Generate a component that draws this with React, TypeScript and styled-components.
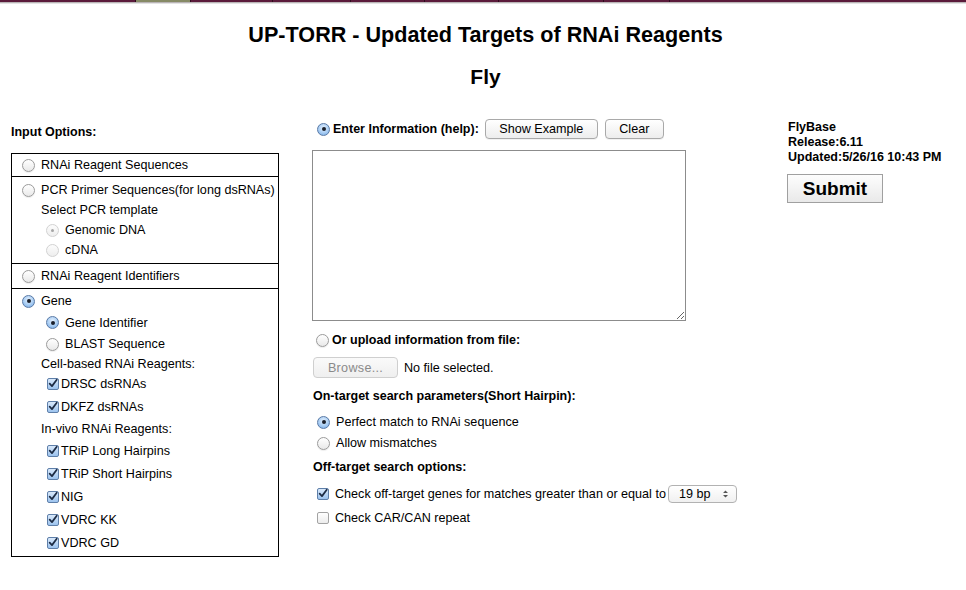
import React from "react"
import styled, { createGlobalStyle, css } from "styled-components"

const GlobalStyle = createGlobalStyle`
  html, body {
    margin: 0;
    padding: 0;
    background: #fff;
  }
  body {
    font-family: "Liberation Sans", Arial, Helvetica, sans-serif;
    font-size: 12.6px;
    color: #000;
  }
`

const tabs = [
  { w: 135 },
  { w: 54, active: true },
  { w: 81 },
  { w: 77 },
  { w: 73 },
  { w: 73 },
  { w: 104 },
  { w: 65 },
  { w: 304 },
]

type RadioState = "on" | "off" | "dim-on" | "dim-off"

const Radio = ({ state }: { state: RadioState }) => (
  <StyledRadio $state={state}>{(state === "on" || state === "dim-on") && <Dot $dim={state === "dim-on"} />}</StyledRadio>
)

const Check = ({ checked }: { checked: boolean }) => (
  <StyledCheck $checked={checked}>
    {checked && (
      <svg width="11" height="11" viewBox="0 0 11 11">
        <path d="M1.8 5.6 L4.4 8.4 L9.6 1.4" fill="none" stroke="#1d2c44" strokeWidth="1.9" strokeLinecap="round" strokeLinejoin="round" />
      </svg>
    )}
  </StyledCheck>
)

const App = () => {
  return (
    <>
      <GlobalStyle />
      <TopBar>
        {tabs.map((t, i) => (
          <Tab key={i} $w={t.w} $active={!!t.active} $first={i === 0} />
        ))}
      </TopBar>
      <Title>UP-TORR - Updated Targets of RNAi Reagents</Title>
      <SubTitle>Fly</SubTitle>

      <Main>
        <LeftColumn>
          <BoldLabel $top={7}>Input Options:</BoldLabel>
          <OptionsBox>
            <Section $pad="0">
              <Row $h={22} $indent={10}>
                <Radio state="off" />
                <span>RNAi Reagent Sequences</span>
              </Row>
            </Section>
            <Section $pad="3px 0">
              <Row $h={20} $indent={10}>
                <Radio state="off" />
                <span>PCR Primer Sequences(for long dsRNAs)</span>
              </Row>
              <Row $h={20} $indent={29}>
                Select PCR template
              </Row>
              <Row $h={20} $indent={34}>
                <Radio state="dim-on" />
                <span>Genomic DNA</span>
              </Row>
              <Row $h={20} $indent={34}>
                <Radio state="dim-off" />
                <span>cDNA</span>
              </Row>
            </Section>
            <Section $pad="1px 0">
              <Row $h={22} $indent={10}>
                <Radio state="off" />
                <span>RNAi Reagent Identifiers</span>
              </Row>
            </Section>
            <Section $pad="1px 0 2px">
              <Row $h={22} $indent={10}>
                <Radio state="on" />
                <span>Gene</span>
              </Row>
              <Row $h={21} $indent={34}>
                <Radio state="on" />
                <span>Gene Identifier</span>
              </Row>
              <Row $h={22} $indent={34}>
                <Radio state="off" />
                <span>BLAST Sequence</span>
              </Row>
              <Row $h={17} $indent={29}>
                Cell-based RNAi Reagents:
              </Row>
              <Row $h={23} $indent={35} $gap={2}>
                <Check checked />
                <span>DRSC dsRNAs</span>
              </Row>
              <Row $h={23} $indent={35} $gap={2}>
                <Check checked />
                <span>DKFZ dsRNAs</span>
              </Row>
              <Row $h={21} $indent={29}>
                In-vivo RNAi Reagents:
              </Row>
              {["TRiP Long Hairpins", "TRiP Short Hairpins", "NIG", "VDRC KK", "VDRC GD"].map(l => (
                <Row key={l} $h={23} $indent={35} $gap={2}>
                  <Check checked />
                  <span>{l}</span>
                </Row>
              ))}
            </Section>
          </OptionsBox>
        </LeftColumn>

        <MiddleColumn>
          <Line $h={22} $indent={4} $gap={3}>
            <Radio state="on" />
            <b>Enter Information (help):</b>
            <Button $w={113} $ml={3}>Show Example</Button>
            <Button $w={59} $ml={4}>Clear</Button>
          </Line>
          <TextArea />
          <Line $h={20} $top={9} $indent={3} $gap={3}>
            <Radio state="off" />
            <b>Or upload information from file:</b>
          </Line>
          <Line $h={21} $top={7} $gap={6}>
            <BrowseButton disabled>Browse...</BrowseButton>
            <span>No file selected.</span>
          </Line>
          <BoldLabel $top={11}>On-target search parameters(Short Hairpin):</BoldLabel>
          <Line $h={20} $top={9} $indent={4} $gap={6}>
            <Radio state="on" />
            <span>Perfect match to RNAi sequence</span>
          </Line>
          <Line $h={20} $top={1} $indent={4} $gap={6}>
            <Radio state="off" />
            <span>Allow mismatches</span>
          </Line>
          <BoldLabel $top={7}>Off-target search options:</BoldLabel>
          <Line $h={18} $top={11} $indent={4} $gap={6}>
            <Check checked />
            <span>Check off-target genes for matches greater than or equal to</span>
            <SelectBox>
              <span>19 bp</span>
              <svg width="7" height="10" viewBox="0 0 7 10">
                <path d="M1 4 L3.5 1.5 L6 4 Z M1 6 L3.5 8.5 L6 6 Z" fill="#555" />
              </svg>
            </SelectBox>
          </Line>
          <Line $h={18} $top={6} $indent={4} $gap={6}>
            <Check checked={false} />
            <span>Check CAR/CAN repeat</span>
          </Line>
        </MiddleColumn>

        <RightColumn>
          <InfoText>
            FlyBase
            <br />
            Release:6.11
            <br />
            Updated:5/26/16 10:43 PM
          </InfoText>
          <SubmitButton>Submit</SubmitButton>
        </RightColumn>
      </Main>
    </>
  )
}

export default App

const TopBar = styled.div`
  display: flex;
  height: 2px;
  border-bottom: 1px solid #b9b4b6;
  box-shadow: 0 1px 0 #e4e4e4;
`

const Tab = styled.div<{ $w: number; $active: boolean; $first: boolean }>`
  flex: 0 0 ${p => p.$w}px;
  background: ${p => (p.$active ? "#868a66" : "#5b1b3b")};
  border-left: ${p => (p.$first ? "none" : "1px solid #2e0b1d")};
`

const Title = styled.h1`
  margin: 20px 0 0;
  padding-left: 5px;
  text-align: center;
  font-size: 21.6px;
  line-height: 24px;
  font-weight: bold;
`

const SubTitle = styled.h2`
  margin: 18px 0 0;
  padding-left: 5px;
  text-align: center;
  font-size: 21px;
  line-height: 24px;
  font-weight: bold;
`

const Main = styled.div`
  display: flex;
  margin-top: 29px;
  padding-left: 11px;
`

const LeftColumn = styled.div`
  flex: 0 0 268px;
`

const MiddleColumn = styled.div`
  flex: 0 0 475px;
  margin-left: 34px;
  display: flex;
  flex-direction: column;
  align-items: flex-start;
`

const RightColumn = styled.div`
  padding-top: 2px;
`

const BoldLabel = styled.div<{ $top: number }>`
  margin-top: ${p => p.$top}px;
  font-weight: bold;
  font-size: 12.5px;
  line-height: 14px;
`

const OptionsBox = styled.div`
  margin-top: 14px;
  border: 1px solid #000;
`

const Section = styled.div<{ $pad: string }>`
  padding: ${p => p.$pad};
  & + & {
    border-top: 1px solid #000;
  }
`

const Row = styled.div<{ $h: number; $indent: number; $gap?: number }>`
  display: flex;
  align-items: center;
  height: ${p => p.$h}px;
  padding-left: ${p => p.$indent}px;
  gap: ${p => p.$gap ?? 6}px;
  white-space: nowrap;
`

const Line = styled.div<{ $h: number; $top?: number; $indent?: number; $gap?: number }>`
  display: flex;
  align-items: center;
  height: ${p => p.$h}px;
  margin-top: ${p => p.$top ?? 0}px;
  padding-left: ${p => p.$indent ?? 0}px;
  gap: ${p => p.$gap ?? 6}px;
  white-space: nowrap;

  b {
    font-size: 12.5px;
  }
`

const StyledRadio = styled.span<{ $state: RadioState }>`
  flex: 0 0 auto;
  width: 13px;
  height: 13px;
  box-sizing: border-box;
  border-radius: 50%;
  display: inline-flex;
  align-items: center;
  justify-content: center;
  ${p => {
    switch (p.$state) {
      case "on":
        return css`
          border: 1px solid #5a7aa6;
          background: radial-gradient(circle at 50% 35%, #e4f0fd 0%, #a9cdf3 55%, #6fa6e4 100%);
        `
      case "dim-on":
      case "dim-off":
        return css`
          border: 1px solid #d2d2d2;
          background: linear-gradient(#fcfcfc, #eeeeee);
        `
      default:
        return css`
          border: 1px solid #9b9b9b;
          background: linear-gradient(#ffffff, #e9e9e9);
          box-shadow: 0 1px 1px rgba(0, 0, 0, 0.08);
        `
    }
  }}
`

const Dot = styled.span<{ $dim: boolean }>`
  width: ${p => (p.$dim ? 3 : 4)}px;
  height: ${p => (p.$dim ? 3 : 4)}px;
  border-radius: 50%;
  background: ${p => (p.$dim ? "#a5a5a5" : "#1a1f2b")};
`

const StyledCheck = styled.span<{ $checked: boolean }>`
  flex: 0 0 auto;
  width: 12px;
  height: 12px;
  box-sizing: border-box;
  border-radius: 2px;
  display: inline-flex;
  align-items: center;
  justify-content: center;
  border: 1px solid ${p => (p.$checked ? "#5e7fa9" : "#a3a3a3")};
  background: ${p => (p.$checked ? "linear-gradient(#d9e9fb, #9cc3ee)" : "linear-gradient(#ffffff, #ececec)")};
  svg {
    margin-top: -1px;
  }
`

const Button = styled.button<{ $w: number; $ml: number }>`
  width: ${p => p.$w}px;
  height: 20px;
  margin-left: ${p => p.$ml}px;
  padding: 0;
  font-family: "Liberation Sans", Arial, sans-serif;
  font-size: 12.6px;
  color: #000;
  border: 1px solid #a9a9a9;
  border-radius: 4px;
  background: linear-gradient(#ffffff, #ededed);
  box-shadow: 0 1px 0 rgba(0, 0, 0, 0.05);
`

const TextArea = styled.textarea`
  margin: 10px 0 0 -1px;
  width: 374px;
  height: 171px;
  box-sizing: border-box;
  border: 1px solid #8c8c8c;
  padding: 2px;
  resize: both;
  font-family: "Liberation Mono", monospace;
`

const BrowseButton = styled.button`
  width: 85px;
  height: 21px;
  padding: 0;
  font-family: "Liberation Sans", Arial, sans-serif;
  font-size: 12.6px;
  letter-spacing: 0.3px;
  color: #8a8a8a;
  border: 1px solid #cfcfcf;
  border-radius: 4px;
  background: linear-gradient(#fafafa, #efefef);
`

const SelectBox = styled.span`
  display: inline-flex;
  align-items: center;
  justify-content: space-between;
  box-sizing: border-box;
  width: 69px;
  height: 18px;
  margin-left: -4px;
  padding: 0 7px 0 10px;
  border: 1px solid #b2b2b2;
  border-radius: 4px;
  background: linear-gradient(#ffffff, #f0f0f0);
`

const InfoText = styled.div`
  font-weight: bold;
  font-size: 12.5px;
  line-height: 15px;
`

const SubmitButton = styled.button`
  margin: 9px 0 0 -1px;
  width: 96px;
  height: 29px;
  padding: 0;
  font-family: "Liberation Sans", Arial, sans-serif;
  font-weight: bold;
  font-size: 19px;
  color: #000;
  border: 1px solid #a0a0a0;
  border-radius: 0;
  background: linear-gradient(#fdfdfd, #e9e9e9);
`
